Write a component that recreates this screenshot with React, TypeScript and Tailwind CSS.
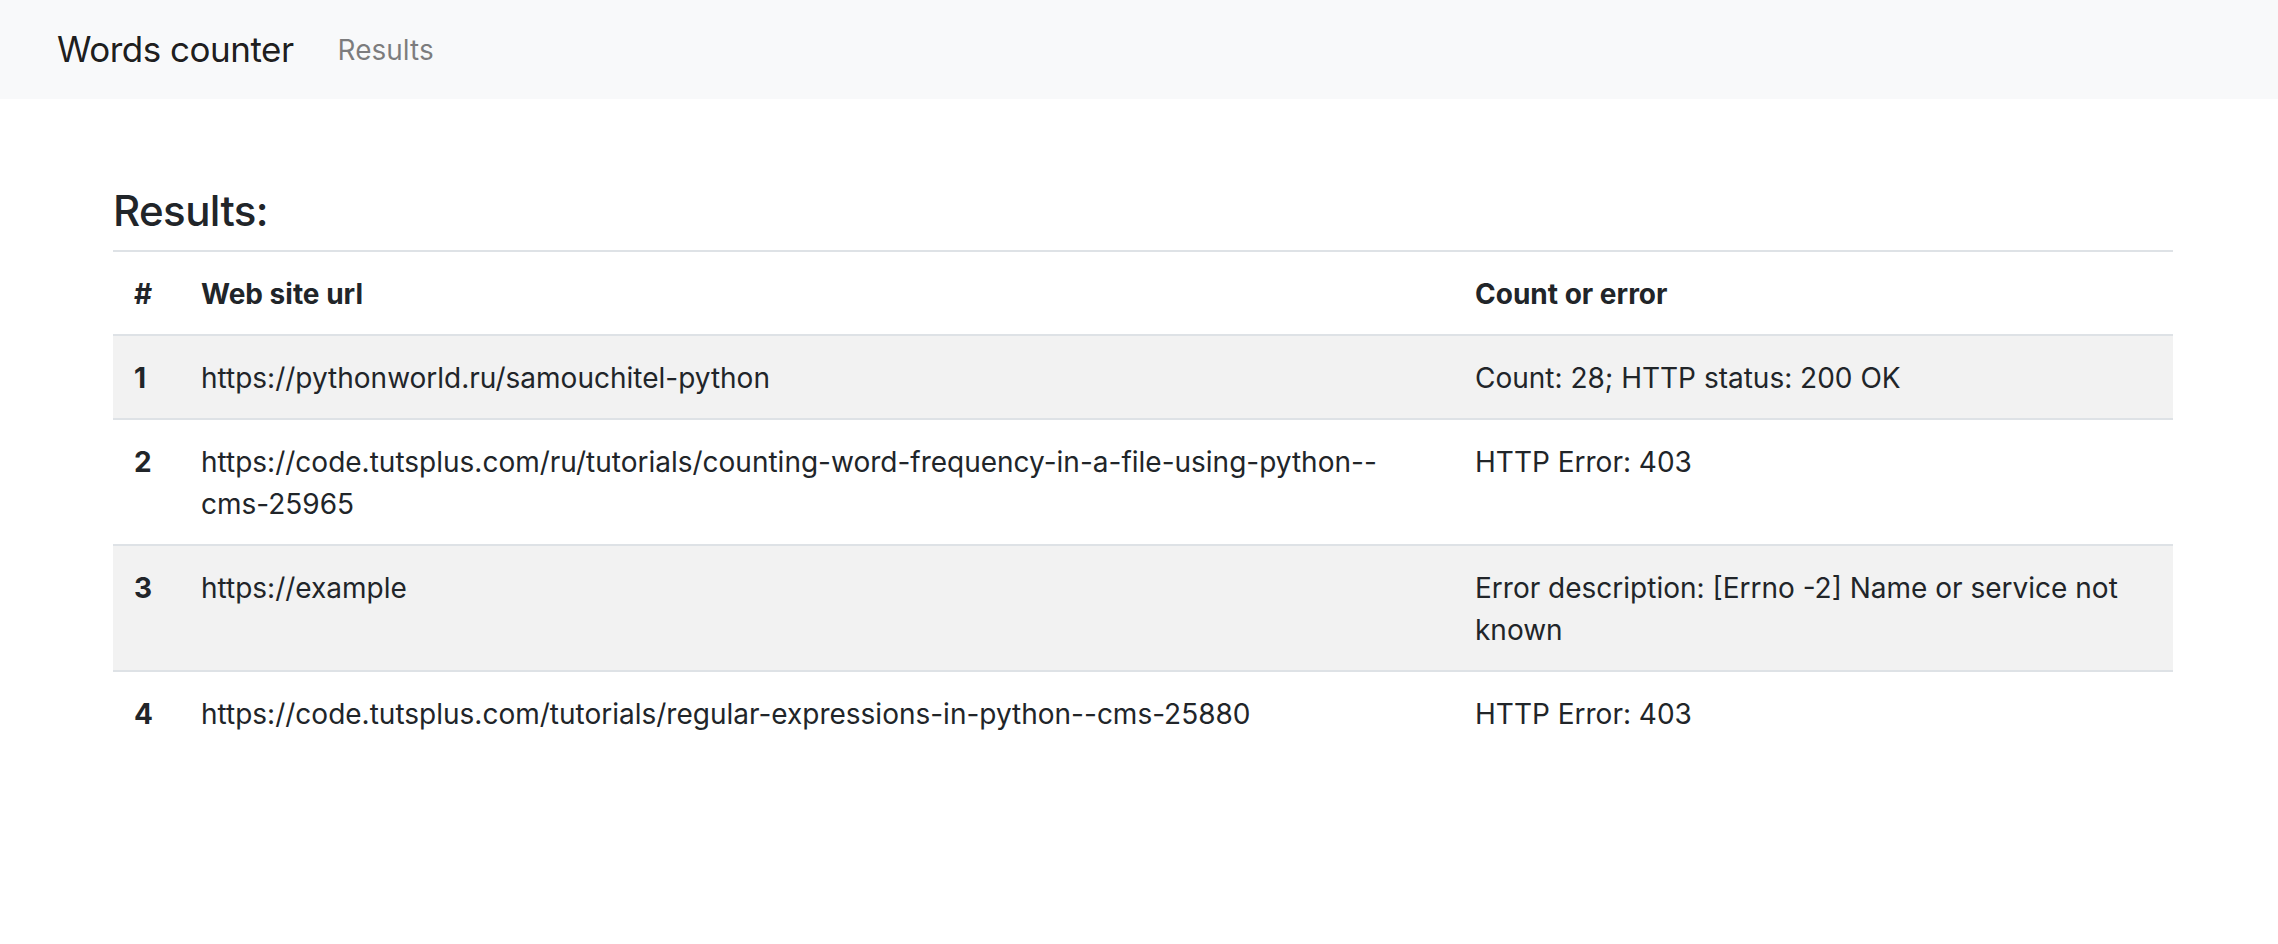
import React from 'react';

type Row = { n: number; url: React.ReactNode; result: React.ReactNode };

const rows: Row[] = [
  { n: 1, url: 'https://pythonworld.ru/samouchitel-python', result: 'Count: 28; HTTP status: 200 OK' },
  {
    n: 2,
    url: (
      <>
        https://code.tutsplus.com/ru/tutorials/counting-word-frequency-in-a-file-using-python--
        <br />
        cms-25965
      </>
    ),
    result: 'HTTP Error: 403',
  },
  {
    n: 3,
    url: 'https://example',
    result: (
      <>
        Error description: [Errno -2] Name or service not
        <br />
        known
      </>
    ),
  },
  { n: 4, url: 'https://code.tutsplus.com/tutorials/regular-expressions-in-python--cms-25880', result: 'HTTP Error: 403' },
];

const App: React.FC = () => {
  return (
    <div className="min-h-screen bg-white text-[#212529] font-['Inter','Liberation_Sans',sans-serif]">
      <nav className="h-[99px] bg-[#f8f9fa] flex items-center pl-[57px]">
        <a className="text-[35px] leading-none text-black/90 tracking-[-0.5px]">Words counter</a>
        <a className="ml-[44px] text-[28px] leading-none text-black/50">Results</a>
      </nav>

      <main className="pl-[113px] pr-[105px] pt-[87px]">
        <h4 className="text-[42px] leading-[50px] font-medium tracking-[-0.6px] mb-[14px]">Results:</h4>
        <table className="w-full border-collapse text-[28px] leading-[42px] table-fixed">
          <colgroup>
            <col className="w-[67px]" />
            <col className="w-[1274px]" />
            <col />
          </colgroup>
          <thead>
            <tr className="border-t-2 border-[#dee2e6]">
              <th className="text-left font-bold px-[21px] pt-[21px] pb-[19px] align-top">#</th>
              <th className="text-left font-bold px-[21px] pt-[21px] pb-[19px] align-top">Web site url</th>
              <th className="text-left font-bold px-[21px] pt-[21px] pb-[19px] align-top">Count or error</th>
            </tr>
          </thead>
          <tbody>
            {rows.map(r => (
              <tr key={r.n} className={`border-t-2 border-[#dee2e6] ${r.n % 2 === 1 ? 'bg-[#f2f2f2]' : 'bg-white'}`}>
                <th className="text-left font-bold px-[21px] pt-[21px] pb-[19px] align-top">{r.n}</th>
                <td className="px-[21px] pt-[21px] pb-[19px] align-top">{r.url}</td>
                <td className="px-[21px] pt-[21px] pb-[19px] align-top">{r.result}</td>
              </tr>
            ))}
          </tbody>
        </table>
      </main>
    </div>
  );
};

export default App;
